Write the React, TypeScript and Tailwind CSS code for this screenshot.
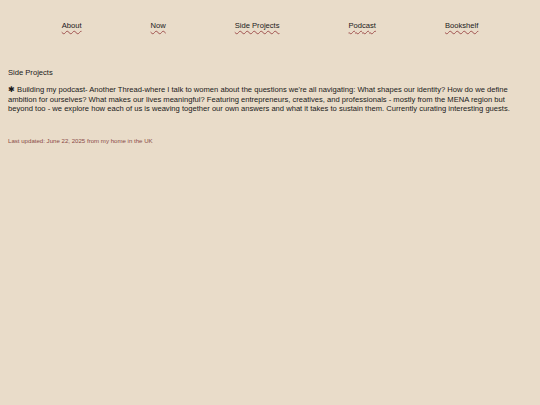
export default function App() {
  const links = ['About', 'Now', 'Side Projects', 'Podcast', 'Bookshelf']
  return (
    <div className="min-h-[405px] w-full bg-[#e9dcc9] text-[#1a1a1a]" style={{ fontFamily: '"Liberation Sans", Arial, sans-serif' }}>
      <nav className="flex justify-center gap-[69px] pt-[21px] text-[7.6px] leading-[10px]">
        {links.map((l) => (
          <a
            key={l}
            href="#"
            className="underline decoration-wavy decoration-[#a0524f] underline-offset-[2px] decoration-[0.6px]"
          >
            {l}
          </a>
        ))}
      </nav>
      <main className="pl-[8px] pr-[24px] pt-[37px] text-[7.6px] leading-[9.8px]">
        <h2>Side Projects</h2>
        <p className="mt-[7px]">
          ✱ Building my podcast- Another Thread-where I talk to women about the questions we're all navigating: What shapes our identity? How do we define ambition for ourselves? What makes our lives meaningful? Featuring entrepreneurs, creatives, and professionals - mostly from the MENA region but beyond too - we explore how each of us is weaving together our own answers and what it takes to sustain them. Currently curating interesting guests.
        </p>
        <p className="mt-[23px] text-[6.1px] leading-[8px] text-[#8a4b48]">
          Last updated: June 22, 2025 from my home in the UK
        </p>
      </main>
    </div>
  )
}
